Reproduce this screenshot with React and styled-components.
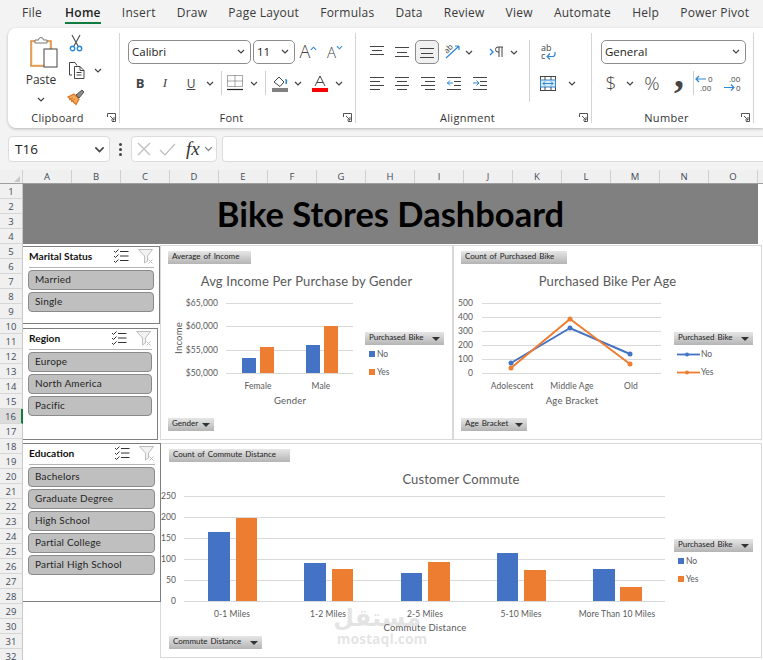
import React from "react";
import styled, { createGlobalStyle } from "styled-components";

const Global = createGlobalStyle`
  html, body { margin: 0; padding: 0; background: #f3f3f3; }
  * { box-sizing: border-box; }
  svg { overflow: visible; }
`;

const UI = `"Open Sans", "Noto Sans", sans-serif`;
const CAL = `Lato, "Open Sans", sans-serif`;

const Page = styled.div`
  width: 763px; height: 660px; overflow: hidden; position: relative;
  background: #f3f3f3; font-family: ${UI}; color: #333;
`;
const TabBar = styled.div`
  display: flex; height: 28px; padding-left: 22px; gap: 21.05px; align-items: flex-start;
`;
const Tab = styled.div`
  font-size: 12px; height: 24px; line-height: 26px; letter-spacing: .25px; white-space: nowrap;
  color: ${p => (p.$active ? "#222" : "#3a3a3a")};
  font-weight: ${p => (p.$active ? 600 : 400)};
  margin-left: ${p => (p.$active ? 2 : 0)}px;
  border-bottom: ${p => (p.$active ? "2px solid #107c41" : "none")};
`;
const Ribbon = styled.div`
  display: flex; margin-left: 8px; height: 100px; background: #fff;
  border-radius: 8px 0 0 8px; box-shadow: 0 1px 3px rgba(0,0,0,.25);
`;
const Group = styled.div`
  width: ${p => p.$w}px; height: 90px; margin-top: 5px; padding-top: 7px;
  padding-left: ${p => p.$pl || 0}px; border-right: 1px solid #d4d4d4;
  display: flex; flex-direction: column; position: relative;
`;
const GroupBody = styled.div`display: flex; flex: 1; min-height: 0;`;
const GroupStack = styled.div`
  display: flex; flex-direction: column; gap: 7px; flex: ${p => (p.$w || p.$pl ? "none" : "1")};
  width: ${p => (p.$w ? `${p.$w}px` : "auto")}; padding-left: ${p => p.$pl || 0}px;
`;
const GroupFoot = styled.div`
  display: flex; align-items: center; height: 11px; margin-bottom: 0;
  margin-left: ${p => (p.$pl ? -p.$pl : 0)}px; padding-right: 3px;
`;
const GroupLabel = styled.div`
  flex: 1; text-align: center; font-size: 11px; letter-spacing: .3px; color: #333; line-height: 11px;
`;
const Row = styled.div`display: flex; align-items: center; height: 24px;`;
const Tool = styled.div`
  width: ${p => p.$w || 24}px; height: ${p => p.$h || 24}px; margin-left: ${p => p.$ml || 0}px;
  display: flex; align-items: center; justify-content: center; flex: none;
  border-radius: 5px;
  ${p => p.$sel && "background:#f0f0f0; border:1px solid #8a8a8a;"}
`;
const ToolGlyph = styled(Tool)`
  font-size: ${p => p.$size || 14}px; font-weight: ${p => p.$weight || 400};
  font-style: ${p => (p.$italic ? "italic" : "normal")};
  font-family: ${p => (p.$serif ? '"Liberation Serif", serif' : UI)};
  text-decoration: ${p => (p.$under ? "underline" : "none")};
  color: #444; padding-bottom: ${p => p.$pb || 0}px;
`;
const SuperMark = styled.span`
  align-self: flex-start; margin-top: 4px; line-height: 0;
`;
const Combo = styled.div`
  width: ${p => p.$w}px; height: 24px; margin-left: ${p => p.$ml || 0}px;
  border: 1px solid #8d8d8d; border-radius: 5px; background: #fff; flex: none;
  display: flex; align-items: center; justify-content: space-between; padding: 0 5px 2px 3px;
  font-size: 11.5px; color: #222; font-family: ${UI};
`;
const VSep = styled.div`
  width: 1px; height: 24px; background: #d0d0d0; margin: 0 ${p => p.$r || 0}px 0 ${p => p.$l || 5}px; flex: none;
`;
const PasteCol = styled.div`
  width: 46px; margin-left: 10px; margin-top: -4px; display: flex; flex-direction: column; align-items: center; flex: none;
`;
const PasteMark = styled.div`margin-left: 5px; line-height: 0;`;
const PasteText = styled.div`font-size: 12px; line-height: 14px; margin-top: 5px; color: #333;`;
const PasteChev = styled.div`margin-top: 9px; line-height: 0;`;
const SmallCol = styled.div`
  display: flex; flex-direction: column; gap: 9px; margin-left: 3px; margin-top: -6px;
`;
const SmallRow = styled.div`display: flex; align-items: center; gap: 9px; height: 18px;`;
const VRule = styled.div`width: 1px; height: 62px; background: #d0d0d0; flex: none;`;

const FormulaArea = styled.div`display: flex; height: 42px; padding-top: 8px; align-items: flex-start;`;
const FBox = styled.div`
  height: 26px; background: #fff; border: 1px solid #dcdcdc; border-radius: 4px;
  width: ${p => p.$w}px; margin-left: ${p => p.$ml}px; flex: none;
  display: flex; align-items: center; font-size: 13.5px; color: #222;
  ${p => p.$grow && "flex:1; border-right:none; border-radius:4px 0 0 4px;"}
`;
const NameText = styled.span`flex: 1; padding-left: 6px;`;
const Dots = styled.div`
  width: 3px; margin: 7px 0 0 9px; display: flex; flex-direction: column; gap: 2px; flex: none;
  i { display: block; width: 3px; height: 3px; border-radius: 50%; background: #444; }
`;
const XCheck = styled.svg`margin-left: 5px; flex: none;`;
const FxText = styled.span`
  font-family: "Liberation Serif", serif; font-style: italic; font-size: 19px; line-height: 20px; color: #333; margin-left: 3px; margin-right: 4px;
`;

const ColHeader = styled.div`
  display: flex; height: 14px; background: #f0f0f0; border-bottom: 1px solid #9f9f9f;
`;
const Corner = styled.div`
  width: 23px; flex: none; border-right: 1px solid #d0d0d0; display: flex; align-items: flex-end; justify-content: flex-end; padding: 0 2px 1px 0;
`;
const ColCell = styled.div`
  width: 49px; flex: none; border-right: 1px solid #d0d0d0; text-align: center;
  font-size: 9.5px; line-height: 13px; color: #3f4a58;
`;
const Sheet = styled.div`display: flex; position: relative; background: #fff; height: 490px;`;
const RowHeader = styled.div`
  width: 23px; flex: none; display: flex; flex-direction: column; background: #f0f0f0;
`;
const RowCell = styled.div`
  height: 15px; flex: none; text-align: center; font-size: 9.5px; line-height: 15px; color: #3f4a58;
  border-bottom: 1px solid #d6d6d6; border-right: ${p => (p.$sel ? "2px solid #107c41" : "1px solid #c8c8c8")};
  background: ${p => (p.$sel ? "#dcdcdc" : "transparent")};
`;
const Canvas = styled.div`flex: 1; display: flex; flex-direction: column; min-width: 0;`;
const TitleBand = styled.div`
  width: 735px; height: 60px; background: #808080; color: #000; flex: none;
  display: flex; align-items: center; justify-content: center;
  font-family: ${CAL}; font-weight: 700; font-size: 34.5px; padding: 0 0 2px 0;
`;
const Board = styled.div`display: flex; flex: 1; min-height: 0;`;
const SlicerCol = styled.div`width: 137px; flex: none; display: flex; flex-direction: column; position: relative; z-index: 1;`;
const Slicer = styled.div`
  width: ${p => p.$w}px; height: ${p => p.$h}px; margin-top: ${p => p.$top}px; flex: none;
  border: 1px solid #7f7f7f; border-left: none; background: #fff; padding: 0 5px 0 5px;
`;
const SlicerHead = styled.div`
  display: flex; align-items: center; height: 21px; padding-bottom: 2px; border-bottom: 1px solid #b5b5b5; margin: 0 0 2px 1px;
  font-family: ${CAL}; font-weight: 700; font-size: 10.2px; color: #111;
`;
const SlicerName = styled.span`flex: 1;`;
const SlicerIcons = styled.div`display: flex; align-items: center; gap: 9px;`;
const SlicerItem = styled.div`
  height: 20px; margin-bottom: 2px; background: #bfbfbf; border: 1px solid #8a8a8a; border-radius: 4px;
  font-family: ${CAL}; font-size: 10px; line-height: 16px; padding-left: 6px; color: #1f1f1f; letter-spacing: .2px;
`;
const ChartsCol = styled.div`flex: 1; display: flex; flex-direction: column; padding-top: 1px; min-width: 0;`;
const ChartsTop = styled.div`display: flex; flex: none; height: 195px;`;
const Card = styled.div`
  width: ${p => p.$w}px; height: ${p => p.$h}px; flex: none; background: #fff;
  border: 1px solid #d9d9d9; padding: 5px 0 0 0; display: flex; flex-direction: column;
  margin-top: ${p => p.$top || 0}px;
`;
const FieldButton = styled.div`
  width: ${p => p.$w}px; height: 13px; flex: none; margin-left: ${p => p.$ml || 0}px;
  background: linear-gradient(#e6e6e6, #b4b4b4); font-family: ${CAL}; font-size: 8px; line-height: 11px;
  padding: 0 4px 2px 4px; color: #222; display: flex; align-items: center; justify-content: space-between;
  white-space: nowrap; word-spacing: 1px;
`;
const Arrow = styled.i`
  width: 0; height: 0; margin-top: 2px; border-left: 4px solid transparent; border-right: 4px solid transparent; border-top: 4px solid #333;
`;
const ChartTitle = styled.div`
  height: 24px; margin-top: 6px; flex: none; text-align: center; font-family: ${CAL};
  font-size: 13px; line-height: 22px; color: #595959; letter-spacing: .15px;
`;
const PlotRow = styled.div`display: flex; flex: none; height: ${p => p.$h}px;`;
const Legend = styled.div`
  width: 79px; flex: none; padding-top: ${p => p.$top}px; display: flex; flex-direction: column;
`;
const LegendEntry = styled.div`
  display: flex; align-items: center; height: 18px; padding-left: ${p => (p.$line ? 3 : 4)}px; gap: ${p => (p.$line ? 1 : 2)}px;
  font-family: ${CAL}; font-size: 8.5px; color: #595959;
`;
const Swatch = styled.i`width: 6px; height: 6px; background: ${p => p.$c}; display: block;`;
const Watermark = styled.div`
  position: absolute; left: 335px; top: 420px; width: 94px; text-align: center; pointer-events: none;
  color: rgba(150,150,150,.27); font-weight: 700; z-index: 3;
`;
const WaterAr = styled.div`font-family: "DejaVu Sans", sans-serif; font-size: 24px; line-height: 29px; direction: rtl; padding-right: 8px;`;
const WaterEn = styled.div`font-family: "Open Sans", sans-serif; font-size: 14px; line-height: 14px; margin-top: -1px; white-space: nowrap;`;

const Axis = styled.text`font-family: ${CAL}; font-size: 8.5px; fill: #595959; letter-spacing: .1px;`;
const AxisTitle = styled.text`font-family: ${CAL}; font-size: 9.5px; fill: #595959; letter-spacing: .2px;`;
const PlotSvg = styled.svg`flex: none; display: block;`;
const IconLabel = styled.text`font-family: ${UI}; font-size: ${p => p.$s}px; fill: #444;`;

const BLUE = "#4472c4", ORANGE = "#ed7d31", GRID = "#d9d9d9";

const Chev = ({ w = 8, c = "#444" }) => (
  <svg width={w} height={(w * 5) / 8} viewBox="0 0 8 5"><path d="M1 1l3 3 3-3" fill="none" stroke={c} strokeWidth="1.2" /></svg>
);
const Launcher = () => (
  <svg width="9" height="9" viewBox="0 0 9 9" fill="none" stroke="#555"><path d="M.5 4V.5h8v8H5" /><path d="M3 3l4 4M7 4v3H4" /></svg>
);
const Lines = ({ rows, w = 14, h = 14, blue }) => (
  <svg width={w} height={h} viewBox={`0 0 ${w} ${h}`}>
    {rows.map(([a, b, y], i) => <line key={i} x1={a} x2={b} y1={y + .5} y2={y + .5} stroke="#444" />)}
    {blue}
  </svg>
);
const PasteIcon = () => (
  <svg width="28" height="32" viewBox="0 0 28 32">
    <rect x="1" y="5" width="20" height="25" fill="#fde9cf" stroke="#d9822b" strokeWidth="1.4" />
    <rect x="3" y="7" width="16" height="21" fill="#fff" />
    <path d="M5 7V4h3.500a2.500 2.500 0 0 1 5 0H17v3z" fill="#fff" stroke="#777" />
    <rect x="14" y="13" width="13" height="18" fill="#fff" stroke="#444" />
  </svg>
);
const Scissors = () => (
  <svg width="14" height="18" viewBox="0 0 14 18" fill="none">
    <path d="M3 1l6 11M11 1L5 12" stroke="#555" strokeWidth="1.2" />
    <circle cx="3.500" cy="14.500" r="2.200" stroke="#2e86d5" strokeWidth="1.400" />
    <circle cx="10.500" cy="14.500" r="2.200" stroke="#2e86d5" strokeWidth="1.400" />
  </svg>
);
const CopyIcon = () => (
  <svg width="17" height="17" viewBox="0 0 17 17" fill="none" stroke="#444">
    <path d="M4 13H1.500V.5H7l2 3" />
    <path d="M6.500 4.500H12l4 4v8H6.500z" fill="#fff" />
    <path d="M12 4.500v4h4M8.500 10.500h5M8.500 13h5" />
  </svg>
);
const Brush = () => (
  <svg width="18" height="16" viewBox="0 0 18 16" fill="none">
    <path d="M1 8l6-3 5 5-3 5.500z" fill="#f4a95a" stroke="#d9762a" strokeWidth="1.200" />
    <path d="M2 11l4-2M4 13l4-3" stroke="#d9762a" />
    <path d="M9 6l6-5 2 2-5 6z" fill="#8a8a8a" stroke="#555" />
  </svg>
);
const Caret = ({ up }) => (
  <svg width="7" height="5" viewBox="0 0 8 5"><path d={up ? "M1 4l3-3 3 3" : "M1 1l3 3 3-3"} fill="none" stroke="#2e86d5" strokeWidth="1.200" /></svg>
);
const Borders = () => (
  <svg width="16" height="16" viewBox="0 0 16 16" fill="none">
    <path d="M.5.500h15v11h-15zM8 .500v11M.5 6h15" stroke="#555" strokeDasharray="1 1" />
    <path d="M0 14.500h16" stroke="#222" strokeWidth="1.200" />
  </svg>
);
const Fill = () => (
  <svg width="17" height="17" viewBox="0 0 17 17">
    <path d="M2 7l5-5 5 5-4 4.500z" fill="#fff" stroke="#444" />
    <path d="M13 4a2 2 0 0 1 2 3v2h-1.500V6z" fill="#2e86d5" />
    <rect x="0" y="13" width="16" height="4" fill="#808080" />
  </svg>
);
const FontColor = () => (
  <svg width="16" height="17" viewBox="0 0 16 17">
    <path d="M3 11L8 1l5 10M5 7.500h6" fill="none" stroke="#444" />
    <rect x="0" y="13" width="16" height="4" fill="#f00" />
  </svg>
);
const Rotate = () => (
  <svg width="18" height="18" viewBox="0 0 18 18" fill="none">
    <path d="M3 15L16 3M16 3h-4M16 3v4" stroke="#2e86d5" strokeWidth="1.200" />
    <g transform="rotate(-45 6 6)"><IconLabel $s={8} x="1" y="8">ab</IconLabel></g>
  </svg>
);
const Rtl = () => (
  <svg width="18" height="12" viewBox="0 0 18 12" fill="none">
    <path d="M1 3l3 3-3 3" stroke="#2e86d5" strokeWidth="1.400" />
    <path d="M10 1v10M13 1v10M14 1H9a2.500 2.500 0 0 0 0 5h1" stroke="#444" />
  </svg>
);
const Wrap = () => (
  <svg width="17" height="18" viewBox="0 0 17 18" fill="none">
    <IconLabel $s={9} x="1" y="8">ab</IconLabel>
    <IconLabel $s={9} x="1" y="16">c</IconLabel>
    <path d="M15 9v2a2.500 2.500 0 0 1-2.500 2.500H8M10 10.500l-3 3 3 3" stroke="#2e86d5" strokeWidth="1.200" />
  </svg>
);
const Merge = () => (
  <svg width="16" height="15" viewBox="0 0 16 15" fill="none">
    <rect x=".5" y=".5" width="15" height="14" stroke="#444" />
    <rect x=".5" y="4" width="15" height="7" fill="#d8ebfa" stroke="#2e86d5" />
    <path d="M5 .5V4M11 .5V4M5 11v3.500M11 11v3.500" stroke="#444" />
    <path d="M3 7.500h10M5 5.500l-2 2 2 2M11 5.500l2 2-2 2" stroke="#2e86d5" />
  </svg>
);
const IncDec = ({ flip }) => (
  <svg width="23" height="17" viewBox="0 0 23 17" fill="none">
    {flip
      ? <path d="M1 12.500h10M8 9.500l3 3-3 3" stroke="#2e86d5" strokeWidth="1.200" />
      : <path d="M11 4H1M4 1L1 4l3 3" stroke="#2e86d5" strokeWidth="1.200" />}
    <IconLabel $s={8} x={flip ? 6 : 13} y="7">{flip ? ".00" : "0"}</IconLabel>
    <IconLabel $s={8} x={flip ? 13 : 5} y="16">{flip ? "0" : ".00"}</IconLabel>
  </svg>
);
const MultiSelect = () => (
  <svg width="16" height="14" viewBox="0 0 16 14" fill="none" stroke="#333">
    <path d="M1 2l1.500 1.500L5.500.5M1 7l1.500 1.500 3-3M1 12l1.500 1.500 3-3" />
    <path d="M7 2.500h8.500M7 7h8.500M7 11.500h8.500" />
  </svg>
);
const FilterClear = () => (
  <svg width="16" height="15" viewBox="0 0 16 15" fill="none" stroke="#bdbdbd">
    <path d="M.5.500h14l-5 6.500v5L6.500 14V7z" fill="#f2f2f2" />
    <path d="M10.500 10.500l4 4M14.500 10.500l-4 4" />
  </svg>
);

const BarChart = ({ box, w, h, yLabels, yx, gx, bars, cats, title, tx, ty, rot }) => (
  <PlotSvg width={w} height={h} viewBox={box}>
    {yLabels.map(([t, y]) => (
      <g key={t}>
        <line x1={gx[0]} x2={gx[1]} y1={y + .5} y2={y + .5} stroke={GRID} />
        <Axis x={yx} y={y + 3} textAnchor="end">{t}</Axis>
      </g>
    ))}
    {bars.map(([x, bw, top, c], i) => (
      <rect key={i} x={x} y={top} width={bw} height={yLabels[yLabels.length - 1][1] - top} fill={c} />
    ))}
    {cats.map(([t, x, y]) => <Axis key={t} x={x} y={y} textAnchor="middle">{t}</Axis>)}
    <AxisTitle x={tx} y={ty} textAnchor="middle">{title}</AxisTitle>
    {rot && <AxisTitle transform={`translate(${rot.x} ${rot.y}) rotate(-90)`} textAnchor="middle">{rot.t}</AxisTitle>}
  </PlotSvg>
);

const LineMark = ({ c }) => (
  <svg width="23" height="5" viewBox="0 0 23 5">
    <line x1="0" x2="23" y1="2.500" y2="2.500" stroke={c} strokeWidth="1.800" />
    <circle cx="10" cy="2.500" r="2" fill={c} />
  </svg>
);

const AgeChart = () => {
  const ys = [["500", 302], ["400", 316], ["300", 330], ["200", 344], ["100", 358], ["0", 372]];
  const no = [[511, 362], [570, 327], [630, 353]];
  const yes = [[511, 367], [570, 318], [630, 363]];
  return (
    <PlotSvg width="220" height="124" viewBox="454 293 220 124">
      {ys.map(([t, y]) => (
        <g key={t}>
          <line x1="482" x2="661" y1={y + .5} y2={y + .5} stroke={GRID} />
          <Axis x="473" y={y + 3} textAnchor="end">{t}</Axis>
        </g>
      ))}
      {[[no, BLUE], [yes, ORANGE]].map(([pts, c]) => (
        <g key={c}>
          <polyline points={pts.map(p => p.join(",")).join(" ")} fill="none" stroke={c} strokeWidth="2" />
          {pts.map(([x, y]) => <circle key={x} cx={x} cy={y} r="2.500" fill={c} />)}
        </g>
      ))}
      <Axis x="512" y="388" textAnchor="middle">Adolescent</Axis>
      <Axis x="572" y="388" textAnchor="middle">Middle Age</Axis>
      <Axis x="631" y="388" textAnchor="middle">Old</Axis>
      <AxisTitle x="572" y="403" textAnchor="middle">Age Bracket</AxisTitle>
    </PlotSvg>
  );
};

const TABS = ["File", "Home", "Insert", "Draw", "Page Layout", "Formulas", "Data", "Review", "View", "Automate", "Help", "Power Pivot"];
const COLS = "ABCDEFGHIJKLMNO".split("");
const ROWS = Array.from({ length: 32 }, (_, i) => i + 1);

const genderBars = [
  [242, 14, 357, BLUE], [260, 14, 346, ORANGE], [306, 14, 344, BLUE], [324, 14, 325, ORANGE],
];
const commuteBars = [
  [208, 22, 532, BLUE], [236, 21, 518, ORANGE], [304, 22, 563, BLUE], [332, 21, 569, ORANGE],
  [401, 21, 573, BLUE], [428, 22, 562, ORANGE], [497, 21, 553, BLUE], [524, 22, 570, ORANGE],
  [593, 22, 569, BLUE], [620, 22, 587, ORANGE],
];

const SlicerBox = ({ title, items, w, h, top }) => (
  <Slicer $w={w} $h={h} $top={top}>
    <SlicerHead>
      <SlicerName>{title}</SlicerName>
      <SlicerIcons><MultiSelect /><FilterClear /></SlicerIcons>
    </SlicerHead>
    {items.map(t => <SlicerItem key={t}>{t}</SlicerItem>)}
  </Slicer>
);

const LegendBlock = ({ top, line }) => (
  <Legend $top={top}>
    <FieldButton $w={79}>Purchased Bike<Arrow /></FieldButton>
    <LegendEntry $line={line}>{line ? <LineMark c={BLUE} /> : <Swatch $c={BLUE} />}No</LegendEntry>
    <LegendEntry $line={line}>{line ? <LineMark c={ORANGE} /> : <Swatch $c={ORANGE} />}Yes</LegendEntry>
  </Legend>
);

export default function App() {
  return (
    <Page>
      <Global />
      <TabBar>
        {TABS.map(t => <Tab key={t} $active={t === "Home"}>{t}</Tab>)}
      </TabBar>
      <Ribbon>
        <Group $w={112}>
          <GroupBody>
            <PasteCol>
              <PasteMark><PasteIcon /></PasteMark>
              <PasteText>Paste</PasteText>
              <PasteChev><Chev /></PasteChev>
            </PasteCol>
            <SmallCol>
              <SmallRow><Tool $w={18} $h={18}><Scissors /></Tool></SmallRow>
              <SmallRow><Tool $w={18} $h={18}><CopyIcon /></Tool><Chev /></SmallRow>
              <SmallRow><Tool $w={18} $h={18}><Brush /></Tool></SmallRow>
            </SmallCol>
          </GroupBody>
          <GroupFoot><GroupLabel>Clipboard</GroupLabel><Launcher /></GroupFoot>
        </Group>
        <Group $w={236} $pl={8}>
          <GroupStack>
            <Row>
              <Combo $w={123}>Calibri<Chev /></Combo>
              <Combo $w={42} $ml={2}>11<Chev /></Combo>
              <ToolGlyph $w={27} $size={18} $weight={300} $pb={2}>A<SuperMark><Caret up /></SuperMark></ToolGlyph>
              <ToolGlyph $w={26} $size={15} $weight={300} $pb={1}>A<SuperMark><Caret /></SuperMark></ToolGlyph>
            </Row>
            <Row>
              <ToolGlyph $w={24} $size={13} $weight={700}>B</ToolGlyph>
              <ToolGlyph $w={26} $size={13} $italic $serif>I</ToolGlyph>
              <ToolGlyph $w={26} $size={12} $under>U</ToolGlyph>
              <Tool $w={12}><Chev /></Tool>
              <VSep $l={5} $r={0} />
              <Tool $w={26}><Borders /></Tool>
              <Tool $w={12}><Chev /></Tool>
              <VSep $l={5} $r={1} />
              <Tool $w={26}><Fill /></Tool>
              <Tool $w={10}><Chev /></Tool>
              <Tool $w={24} $ml={5}><FontColor /></Tool>
              <Tool $w={12} $ml={1}><Chev /></Tool>
            </Row>
          </GroupStack>
          <GroupFoot $pl={8}><GroupLabel>Font</GroupLabel><Launcher /></GroupFoot>
        </Group>
        <Group $w={236} $pl={9}>
          <GroupBody>
            <GroupStack $w={164}>
              <Row>
                <Tool $w={24}><Lines rows={[[0, 14, 1], [2, 12, 5], [0, 14, 9]]} /></Tool>
                <Tool $w={26}><Lines rows={[[0, 14, 2], [2, 12, 7], [0, 14, 11]]} /></Tool>
                <Tool $w={24} $sel><Lines rows={[[0, 14, 3], [1, 13, 8], [0, 14, 12]]} /></Tool>
                <Tool $w={25}><Rotate /></Tool>
                <Tool $w={10}><Chev /></Tool>
                <Tool $w={24} $ml={12}><Rtl /></Tool>
                <Tool $w={8}><Chev /></Tool>
              </Row>
              <Row>
                <Tool $w={24}><Lines rows={[[0, 14, 1], [0, 10, 5], [0, 14, 9], [0, 10, 13]]} /></Tool>
                <Tool $w={26}><Lines rows={[[0, 14, 1], [2, 12, 5], [0, 14, 9], [2, 12, 13]]} /></Tool>
                <Tool $w={26}><Lines rows={[[0, 14, 1], [4, 14, 5], [0, 14, 9], [4, 14, 13]]} /></Tool>
                <Tool $w={26}><Lines rows={[[0, 14, 1], [7, 14, 5], [7, 14, 9], [0, 14, 13]]} blue={<path d="M6 7H0M3 4.500L.5 7 3 9.500" fill="none" stroke="#2e86d5" />} /></Tool>
                <Tool $w={26}><Lines rows={[[0, 14, 1], [7, 14, 5], [7, 14, 9], [0, 14, 13]]} blue={<path d="M0 7h6M3.500 4.500L6 7 3.500 9.500" fill="none" stroke="#2e86d5" />} /></Tool>
              </Row>
            </GroupStack>
            <VRule />
            <GroupStack $pl={6}>
              <Row><Tool $w={24}><Wrap /></Tool></Row>
              <Row><Tool $w={24}><Merge /></Tool><Tool $w={24}><Chev /></Tool></Row>
            </GroupStack>
          </GroupBody>
          <GroupFoot $pl={9}><GroupLabel>Alignment</GroupLabel><Launcher /></GroupFoot>
        </Group>
        <Group $w={162} $pl={9}>
          <GroupStack>
            <Row><Combo $w={145}>General<Chev /></Combo></Row>
            <Row>
              <ToolGlyph $w={20} $size={19} $weight={300}>$</ToolGlyph>
              <Tool $w={12} $ml={3}><Chev /></Tool>
              <ToolGlyph $w={24} $ml={4} $size={19} $weight={300}>%</ToolGlyph>
              <ToolGlyph $w={24} $ml={3} $size={40} $weight={700} $serif $pb={20}>,</ToolGlyph>
              <VSep $l={2} $r={0} />
              <Tool $w={24}><IncDec /></Tool>
              <Tool $w={24} $ml={4}><IncDec flip /></Tool>
            </Row>
          </GroupStack>
          <GroupFoot $pl={9}><GroupLabel>Number</GroupLabel><Launcher /></GroupFoot>
        </Group>
      </Ribbon>
      <FormulaArea>
        <FBox $w={102} $ml={8}><NameText>T16</NameText><Tool $w={20}><Chev w={11} /></Tool></FBox>
        <Dots><i /><i /><i /></Dots>
        <FBox $w={86} $ml={9}>
          <XCheck width="46" height="16" viewBox="0 0 46 16" fill="none" stroke="#bdbdbd" strokeWidth="1.200">
            <path d="M1 2l12 12M13 2L1 14M23 9l5 5 10-11" />
          </XCheck>
          <FxText>fx</FxText>
          <Chev w={9} c="#888" />
        </FBox>
        <FBox $grow $ml={5} />
      </FormulaArea>
      <ColHeader>
        <Corner><svg width="6" height="6" viewBox="0 0 6 6"><path d="M6 0v6H0z" fill="#c8c8c8" /></svg></Corner>
        {COLS.map(c => <ColCell key={c}>{c}</ColCell>)}
      </ColHeader>
      <Sheet>
        <RowHeader>
          {ROWS.map(r => <RowCell key={r} $sel={r === 16}>{r}</RowCell>)}
        </RowHeader>
        <Canvas>
          <TitleBand>Bike Stores Dashboard</TitleBand>
          <Board>
            <SlicerCol>
              <SlicerBox title="Marital Status" items={["Married", "Single"]} w={137} h={78} top={2} />
              <SlicerBox title="Region" items={["Europe", "North America", "Pacific"]} w={135} h={112} top={4} />
              <SlicerBox title="Education" items={["Bachelors", "Graduate Degree", "High School", "Partial College", "Partial High School"]} w={138} h={159} top={3} />
            </SlicerCol>
            <ChartsCol>
              <ChartsTop>
                <Card $w={293} $h={195}>
                  <FieldButton $w={83} $ml={7}>Average of Income</FieldButton>
                  <ChartTitle>Avg Income Per Purchase by Gender</ChartTitle>
                  <PlotRow $h={124}>
                    <BarChart
                      box="161 293 204 124" w={204} h={124}
                      yLabels={[["$65,000", 302], ["$60,000", 325], ["$55,000", 349], ["$50,000", 372]]}
                      yx={218} gx={[226, 353]} bars={genderBars}
                      cats={[["Female", 258, 388], ["Male", 321, 388]]}
                      title="Gender" tx={290} ty={403}
                      rot={{ x: 182, y: 337, t: "Income" }}
                    />
                    <LegendBlock top={38} />
                  </PlotRow>
                  <FieldButton $w={46} $ml={7}>Gender<Arrow /></FieldButton>
                </Card>
                <Card $w={309} $h={195}>
                  <FieldButton $w={106} $ml={7}>Count of Purchased Bike</FieldButton>
                  <ChartTitle>Purchased Bike Per Age</ChartTitle>
                  <PlotRow $h={124}>
                    <AgeChart />
                    <LegendBlock top={38} line />
                  </PlotRow>
                  <FieldButton $w={66} $ml={7}>Age Bracket<Arrow /></FieldButton>
                </Card>
              </ChartsTop>
              <Card $w={602} $h={215} $top={3}>
                <FieldButton $w={121} $ml={8}>Count of Commute Distance</FieldButton>
                <ChartTitle>Customer Commute</ChartTitle>
                <PlotRow $h={144}>
                  <BarChart
                    box="161 492 513 144" w={513} h={144}
                    yLabels={[["250", 496], ["200", 517], ["150", 538], ["100", 559], ["50", 580], ["0", 601]]}
                    yx={176} gx={[184, 665]} bars={commuteBars}
                    cats={[["0-1 Miles", 232, 617], ["1-2 Miles", 328, 617], ["2-5 Miles", 425, 617], ["5-10 Miles", 521, 617], ["More Than 10 Miles", 617, 617]]}
                    title="Commute Distance" tx={425} ty={631}
                  />
                  <LegendBlock top={47} />
                </PlotRow>
                <FieldButton $w={93} $ml={8}>Commute Distance<Arrow /></FieldButton>
              </Card>
            </ChartsCol>
          </Board>
        </Canvas>
        <Watermark>
          <WaterAr>مستقل</WaterAr>
          <WaterEn>mostaql.com</WaterEn>
        </Watermark>
      </Sheet>
    </Page>
  );
}
